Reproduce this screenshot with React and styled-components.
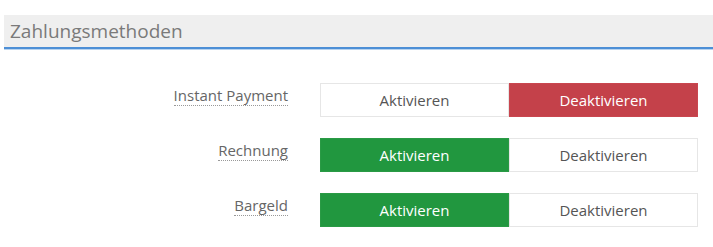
import React from "react";
import styled, { createGlobalStyle } from "styled-components";

const Global = createGlobalStyle`
  html, body { margin: 0; padding: 0; background: #fff; }
  body { font-family: "Open Sans", "Liberation Sans", sans-serif; }
`;

const Page = styled.div`
  width: 713px;
  padding-top: 15px;
`;

const Header = styled.div`
  margin-left: 4px;
  height: 32px;
  background: #efefef;
  border-bottom: 2px solid #4d8fd6;
  box-shadow: 0 1px 0 #b9d4f0;
  display: flex;
  align-items: center;
  padding-left: 6px;
  font-size: 19px;
  color: #7a7a7a;
`;

const Form = styled.div`
  display: grid;
  grid-template-columns: 288px 378px;
  column-gap: 32px;
  row-gap: 21px;
  margin-top: 34px;
`;

const Label = styled.div`
  justify-self: end;
  align-self: start;
  margin-top: 2px;
  font-size: 15px;
  line-height: 20px;
  color: #666;
  border-bottom: 1px dotted #999;
`;

const Toggle = styled.div`
  display: grid;
  grid-template-columns: 1fr 1fr;
  height: 34px;
`;

const Btn = styled.button`
  font-family: "Open Sans", "Liberation Sans", sans-serif;
  font-size: 15px;
  border: 1px solid ${(p) => (p.$variant === "on" ? "#2a9a45" : p.$variant === "off" ? "#c9464f" : "#e6e6e6")};
  background: ${(p) => (p.$variant === "on" ? "#21973f" : p.$variant === "off" ? "#c4414a" : "#fff")};
  color: ${(p) => (p.$variant ? "#fff" : "#555")};
  padding: 0;
  margin: 0;
  cursor: pointer;
`;

const rows = [
  { label: "Instant Payment", active: false },
  { label: "Rechnung", active: true },
  { label: "Bargeld", active: true },
];

export default function App() {
  return (
    <Page>
      <Global />
      <Header>Zahlungsmethoden</Header>
      <Form>
        {rows.map((r) => (
          <React.Fragment key={r.label}>
            <Label>{r.label}</Label>
            <Toggle>
              <Btn $variant={r.active ? "on" : undefined}>Aktivieren</Btn>
              <Btn $variant={!r.active ? "off" : undefined}>Deaktivieren</Btn>
            </Toggle>
          </React.Fragment>
        ))}
      </Form>
    </Page>
  );
}
